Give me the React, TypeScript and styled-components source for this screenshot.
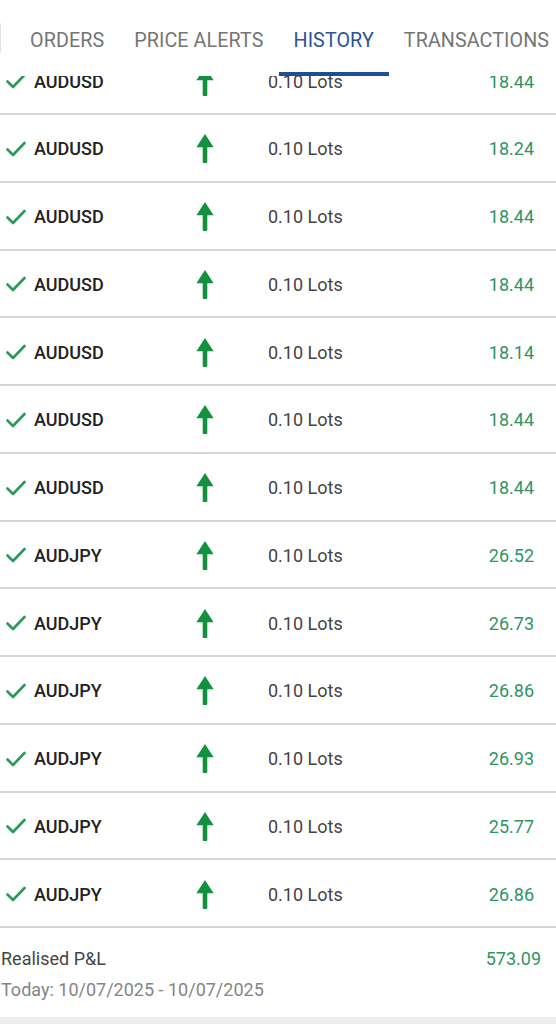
import React from "react";
import styled, { createGlobalStyle } from "styled-components";

const GlobalStyle = createGlobalStyle`
    html, body {
        margin: 0;
        padding: 0;
        background: #ffffff;
    }
    body {
        font-family: Roboto, "Liberation Sans", Arial, sans-serif;
    }
`

const Page = styled.div`
    position: relative;
    width: 556px;
    height: 1024px;
    overflow: hidden;
    background: #ffffff;
`

const TabBar = styled.nav`
    position: absolute;
    top: 0;
    left: 0;
    right: 0;
    height: 76px;
    z-index: 2;
    display: flex;
    align-items: stretch;
    background: #ffffff;
    white-space: nowrap;
`

const EdgeTab = styled.div`
    align-self: center;
    width: 3px;
    height: 30px;
    margin: 0 14px 0 0;
    border-right: 1px solid #e4e4e4;
    border-radius: 0 4px 4px 0;
    background: #f7f7f7;
`

const Tab = styled.div<{ $active?: boolean }>`
    box-sizing: border-box;
    display: flex;
    align-items: center;
    height: 76px;
    padding: 8px 15px 0 15px;
    font-size: 19.7px;
    font-weight: 400;
    letter-spacing: 0.1px;
    color: ${({ $active }) => ($active ? "#2a5597" : "#757575")};
    border-bottom: 4px solid ${({ $active }) => ($active ? "#1f4e96" : "transparent")};
`

const List = styled.div`
    padding-top: 47.25px;
`

const Row = styled.div`
    box-sizing: border-box;
    height: 67.75px;
    display: grid;
    grid-template-columns: 28px 143px 56px 1fr auto;
    align-items: center;
    padding: 2px 22px 0 6px;
    border-bottom: 2px solid #d6d6d6;
`

const Symbol = styled.span`
    font-size: 18px;
    font-weight: 500;
    color: #222222;
`

const ArrowCell = styled.div`
    display: flex;
    justify-content: center;
    align-items: center;
`

const Lots = styled.span`
    padding-left: 35px;
    font-size: 18px;
    color: #444444;
`

const Profit = styled.span`
    font-size: 18px;
    color: #2e9563;
    text-align: right;
`

const Footer = styled.div`
    padding: 14.5px 15px 12.5px 1px;
    border-bottom: 7px solid #ececec;
`

const FooterLine = styled.div`
    display: flex;
    justify-content: space-between;
    line-height: 31px;
    font-size: 18px;
`

const FooterLabel = styled.span<{ $muted?: boolean }>`
    color: ${({ $muted }) => ($muted ? "#858585" : "#444444")};
`

function CheckIcon() {
    return (
        <svg width="20" height="16" viewBox="0 0 20 16">
            <polyline points="1.5,8.5 7,14 18.5,2" fill="none" stroke="#2a9a5a" strokeWidth="2.6" strokeLinecap="round" strokeLinejoin="round" />
        </svg>
    )
}

function UpArrow() {
    return (
        <svg width="18" height="29" viewBox="0 0 18 29">
            <path d="M9 0 L17.6 13.2 L11.3 13.2 L11.3 28 Q11.3 29 10.3 29 L7.7 29 Q6.7 29 6.7 28 L6.7 13.2 L0.4 13.2 Z" fill="#12913f" />
        </svg>
    )
}

const trades = [
    { symbol: "AUDUSD", profit: "18.44" },
    { symbol: "AUDUSD", profit: "18.24" },
    { symbol: "AUDUSD", profit: "18.44" },
    { symbol: "AUDUSD", profit: "18.44" },
    { symbol: "AUDUSD", profit: "18.14" },
    { symbol: "AUDUSD", profit: "18.44" },
    { symbol: "AUDUSD", profit: "18.44" },
    { symbol: "AUDJPY", profit: "26.52" },
    { symbol: "AUDJPY", profit: "26.73" },
    { symbol: "AUDJPY", profit: "26.86" },
    { symbol: "AUDJPY", profit: "26.93" },
    { symbol: "AUDJPY", profit: "25.77" },
    { symbol: "AUDJPY", profit: "26.86" },
]

const tabs = ["ORDERS", "PRICE ALERTS", "HISTORY", "TRANSACTIONS"]

export default function App() {
    return (
        <React.Fragment>
            <GlobalStyle />
            <Page>
                <TabBar>
                    <EdgeTab />
                    {tabs.map((t) => (
                        <Tab key={t} $active={t === "HISTORY"}>{t}</Tab>
                    ))}
                </TabBar>
                <List>
                    {trades.map((trade, i) => (
                        <Row key={i}>
                            <CheckIcon />
                            <Symbol>{trade.symbol}</Symbol>
                            <ArrowCell><UpArrow /></ArrowCell>
                            <Lots>0.10 Lots</Lots>
                            <Profit>{trade.profit}</Profit>
                        </Row>
                    ))}
                </List>
                <Footer>
                    <FooterLine>
                        <FooterLabel>Realised P&amp;L</FooterLabel>
                        <Profit>573.09</Profit>
                    </FooterLine>
                    <FooterLine>
                        <FooterLabel $muted>Today: 10/07/2025 - 10/07/2025</FooterLabel>
                    </FooterLine>
                </Footer>
            </Page>
        </React.Fragment>
    )
}
